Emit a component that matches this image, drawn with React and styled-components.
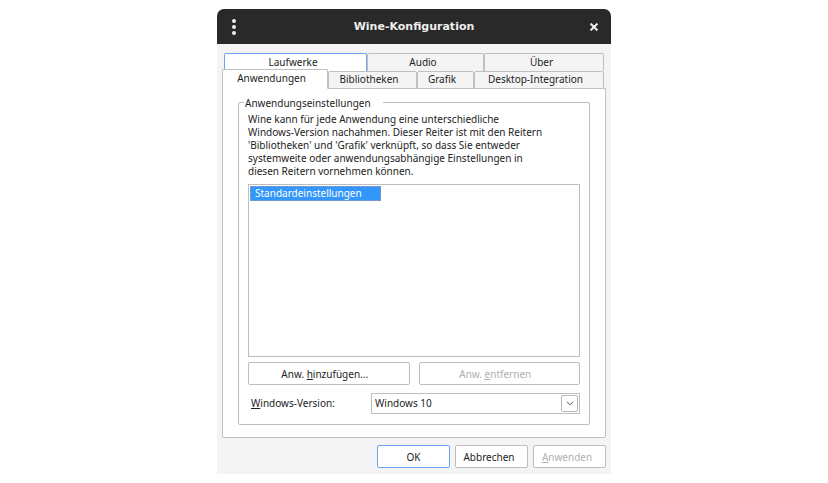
import React, { useState } from "react";
import styled, { createGlobalStyle } from "styled-components";

const GlobalStyle = createGlobalStyle`
  * { box-sizing: border-box; }
  body { margin: 0; background: #fff; }
  body, button, select {
    font-family: "Noto Sans", "Open Sans", sans-serif;
    font-size: 10px;
    line-height: 13px;
    color: #1c1c22;
  }
`;

const Page = styled.main`
  padding: 9px 0;
`;

const Window = styled.section`
  width: 100%;
  max-width: 394px;
  margin: 0 auto;
  background: #f4f4f4;
  border-radius: 7px 7px 0 0;
  overflow: hidden;
`;

const TitleBar = styled.header`
  display: grid;
  grid-template-columns: 34px 1fr 34px;
  align-items: center;
  height: 35px;
  background: #292929;
`;

const Title = styled.h1`
  margin: 0;
  font-family: "DejaVu Sans", sans-serif;
  font-size: 11px;
  line-height: 16px;
  font-weight: 700;
  text-align: center;
  color: #eeeeec;
`;

const TitleButton = styled.button`
  display: flex;
  align-items: center;
  justify-content: center;
  height: 35px;
  padding: 0;
  border: 0;
  background: none;
  color: #eeeeec;
`;

const Content = styled.div`
  padding: 9px 5px 6px;
`;

const BackTabs = styled.div`
  display: grid;
  grid-template-columns: 143fr 117fr 120fr;
  padding: 0 2px;
`;

const FrontTabs = styled.div`
  display: grid;
  grid-template-columns: 106fr 89fr 57fr 130fr;
  padding: 0 2px 0 0;
`;

const Tab = styled.button`
  min-width: 0;
  height: 18px;
  margin: 0 0 -1px;
  padding: 0 7px 1px 0;
  border: 1px solid ${(p) => (p.$focus ? "#6ea3f2" : "#c0c0c0")};
  border-radius: 2px 2px 0 0;
  background: ${(p) => (p.$focus ? "#fff" : "#f4f4f4")};
  white-space: nowrap;
`;

const BackTab = styled(Tab)`
  margin: 0;
  padding: 0 5px 0 0;
  border-bottom: 0;
`;

const ActiveTab = styled(Tab)`
  position: relative;
  z-index: 1;
  height: 20px;
  margin-top: -2px;
  border-bottom-color: #fff;
  background: #fff;
`;

const Panel = styled.div`
  padding: 5px 15px 12px;
  border: 1px solid #c2c2c2;
  border-radius: 0 0 2px 2px;
  background: #fff;
`;

const Group = styled.fieldset`
  min-width: 0;
  margin: 0;
  padding: 3px 9px 10px;
  border: 1px solid #bebebe;
  border-radius: 2px;
`;

const GroupLegend = styled.legend`
  width: 139px;
  margin-left: -4px;
  padding: 3px 0 0 1px;
`;

const Description = styled.p`
  max-width: 298px;
  margin: 0 0 6px;
`;

const ListBox = styled.ul`
  min-height: 173px;
  margin: 0 0 5px;
  padding: 1px;
  border: 1px solid #bebebe;
  list-style: none;
`;

const ListItem = styled.li`
  width: 131px;
  height: 15px;
  padding: 0 4px;
  border: 1px dotted #b09aa8;
  background: #3296fa;
  color: #fff;
`;

const ButtonRow = styled.div`
  display: grid;
  grid-template-columns: 1fr 1fr;
  gap: 9px;
  margin-bottom: 8px;
`;

const Button = styled.button`
  height: 23px;
  padding: 1px 8px 0 0;
  border: 1px solid #bebebe;
  border-radius: 2px;
  background: #fff;
  &:disabled { color: #b0b0b0; }
`;

const VersionRow = styled.div`
  display: grid;
  grid-template-columns: 120px 1fr;
  gap: 3px;
  align-items: center;
`;

const VersionLabel = styled.label`
  padding-left: 3px;
`;

const SelectWrap = styled.div`
  position: relative;
  display: flex;
`;

const Select = styled.select`
  appearance: none;
  width: 100%;
  height: 21px;
  padding: 0 20px 0 3px;
  border: 1px solid #bebebe;
  border-radius: 0;
  background: #fff;
`;

const Arrow = styled.span`
  position: absolute;
  top: 2px;
  right: 2px;
  display: flex;
  align-items: center;
  justify-content: center;
  width: 17px;
  height: 17px;
  border: 1px solid #b8b8b8;
  border-radius: 2px;
  pointer-events: none;
`;

const Footer = styled.footer`
  display: flex;
  justify-content: flex-end;
  gap: 5px;
  margin-top: 7px;
`;

const FooterButton = styled(Button)`
  flex: 0 1 73px;
  padding-right: 5px;
`;

const PrimaryButton = styled(FooterButton)`
  padding-right: 0;
  border-color: #6ea3f2;
`;

const initialItems = ["Standardeinstellungen"];

export default function App() {
  const [version, setVersion] = useState("Windows 10");
  return (
    <>
      <GlobalStyle />
      <Page>
        <Window aria-label="Wine-Konfiguration">
          <TitleBar>
            <TitleButton type="button" aria-label="Menü">
              <svg width="6" height="16" viewBox="0 0 6 16" fill="currentColor">
                <circle cx="3" cy="2" r="2" />
                <circle cx="3" cy="8" r="2" />
                <circle cx="3" cy="14" r="2" />
              </svg>
            </TitleButton>
            <Title>Wine-Konfiguration</Title>
            <TitleButton type="button" aria-label="Schließen">
              <svg width="8" height="8" viewBox="0 0 8 8" stroke="currentColor" strokeWidth="2">
                <path d="M0.6 0.6 7.4 7.4M7.4 0.6 0.6 7.4" />
              </svg>
            </TitleButton>
          </TitleBar>
          <Content>
            <div role="tablist" aria-label="Einstellungen">
              <BackTabs>
                <BackTab type="button" role="tab" $focus>Laufwerke</BackTab>
                <BackTab type="button" role="tab">Audio</BackTab>
                <BackTab type="button" role="tab">Über</BackTab>
              </BackTabs>
              <FrontTabs>
                <ActiveTab type="button" role="tab" aria-selected="true">Anwendungen</ActiveTab>
                <Tab type="button" role="tab">Bibliotheken</Tab>
                <Tab type="button" role="tab">Grafik</Tab>
                <Tab type="button" role="tab">Desktop-Integration</Tab>
              </FrontTabs>
            </div>
            <Panel role="tabpanel">
              <Group>
                <GroupLegend>Anwendungseinstellungen</GroupLegend>
                <Description>
                  Wine kann für jede Anwendung eine unterschiedliche Windows-Version
                  nachahmen. Dieser Reiter ist mit den Reitern 'Bibliotheken' und
                  'Grafik' verknüpft, so dass Sie entweder systemweite oder
                  anwendungsabhängige Einstellungen in diesen Reitern vornehmen können.
                </Description>
                <ListBox role="listbox" aria-label="Anwendungen">
                  {initialItems.map((item) => (
                    <ListItem key={item} role="option" aria-selected="true">{item}</ListItem>
                  ))}
                </ListBox>
                <ButtonRow>
                  <Button type="button">Anw. <u>h</u>inzufügen...</Button>
                  <Button type="button" disabled>Anw. <u>e</u>ntfernen</Button>
                </ButtonRow>
                <VersionRow>
                  <VersionLabel htmlFor="version"><u>W</u>indows-Version:</VersionLabel>
                  <SelectWrap>
                    <Select id="version" value={version} onChange={(e) => setVersion(e.target.value)}>
                      <option>Windows 10</option>
                      <option>Windows 7</option>
                    </Select>
                    <Arrow>
                      <svg width="8" height="5" viewBox="0 0 8 5" fill="none" stroke="#505050">
                        <path d="M1 0.8 4 3.8 7 0.8" />
                      </svg>
                    </Arrow>
                  </SelectWrap>
                </VersionRow>
              </Group>
            </Panel>
            <Footer>
              <PrimaryButton type="button">OK</PrimaryButton>
              <FooterButton type="button">Abbrechen</FooterButton>
              <FooterButton type="button" disabled><u>A</u>nwenden</FooterButton>
            </Footer>
          </Content>
        </Window>
      </Page>
    </>
  );
}
